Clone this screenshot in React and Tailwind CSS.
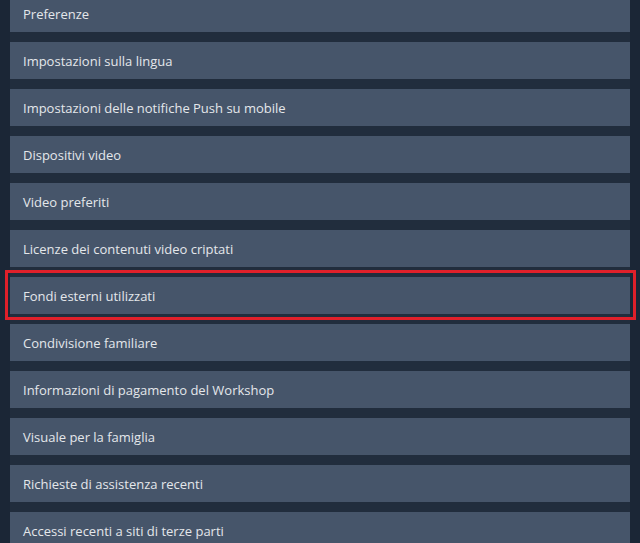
export default function App() {
  const items = [
    "Preferenze",
    "Impostazioni sulla lingua",
    "Impostazioni delle notifiche Push su mobile",
    "Dispositivi video",
    "Video preferiti",
    "Licenze dei contenuti video criptati",
    "Fondi esterni utilizzati",
    "Condivisione familiare",
    "Informazioni di pagamento del Workshop",
    "Visuale per la famiglia",
    "Richieste di assistenza recenti",
    "Accessi recenti a siti di terze parti",
  ];
  return (
    <div className="w-[640px] h-[543px] overflow-hidden bg-[#1b2636] px-[10px]" style={{ fontFamily: '"Open Sans", "Liberation Sans", Arial, sans-serif' }}>
      <div className="bg-[#212d3d] h-full">
        <div className="-mt-[5px] flex flex-col gap-[10px]">
          {items.map((t, i) => (
            <div key={i} className="relative h-[37px] bg-[#46556a] flex items-center pl-[13px] pt-[2px] text-[13px] text-[#e4e7ea]">
              {t}
              {i === 6 && (
                <span className="absolute -top-[7px] -bottom-[6px] -left-[5px] -right-[6px] border-[3px] border-[#e0202a] pointer-events-none" />
              )}
            </div>
          ))}
        </div>
      </div>
    </div>
  );
}
